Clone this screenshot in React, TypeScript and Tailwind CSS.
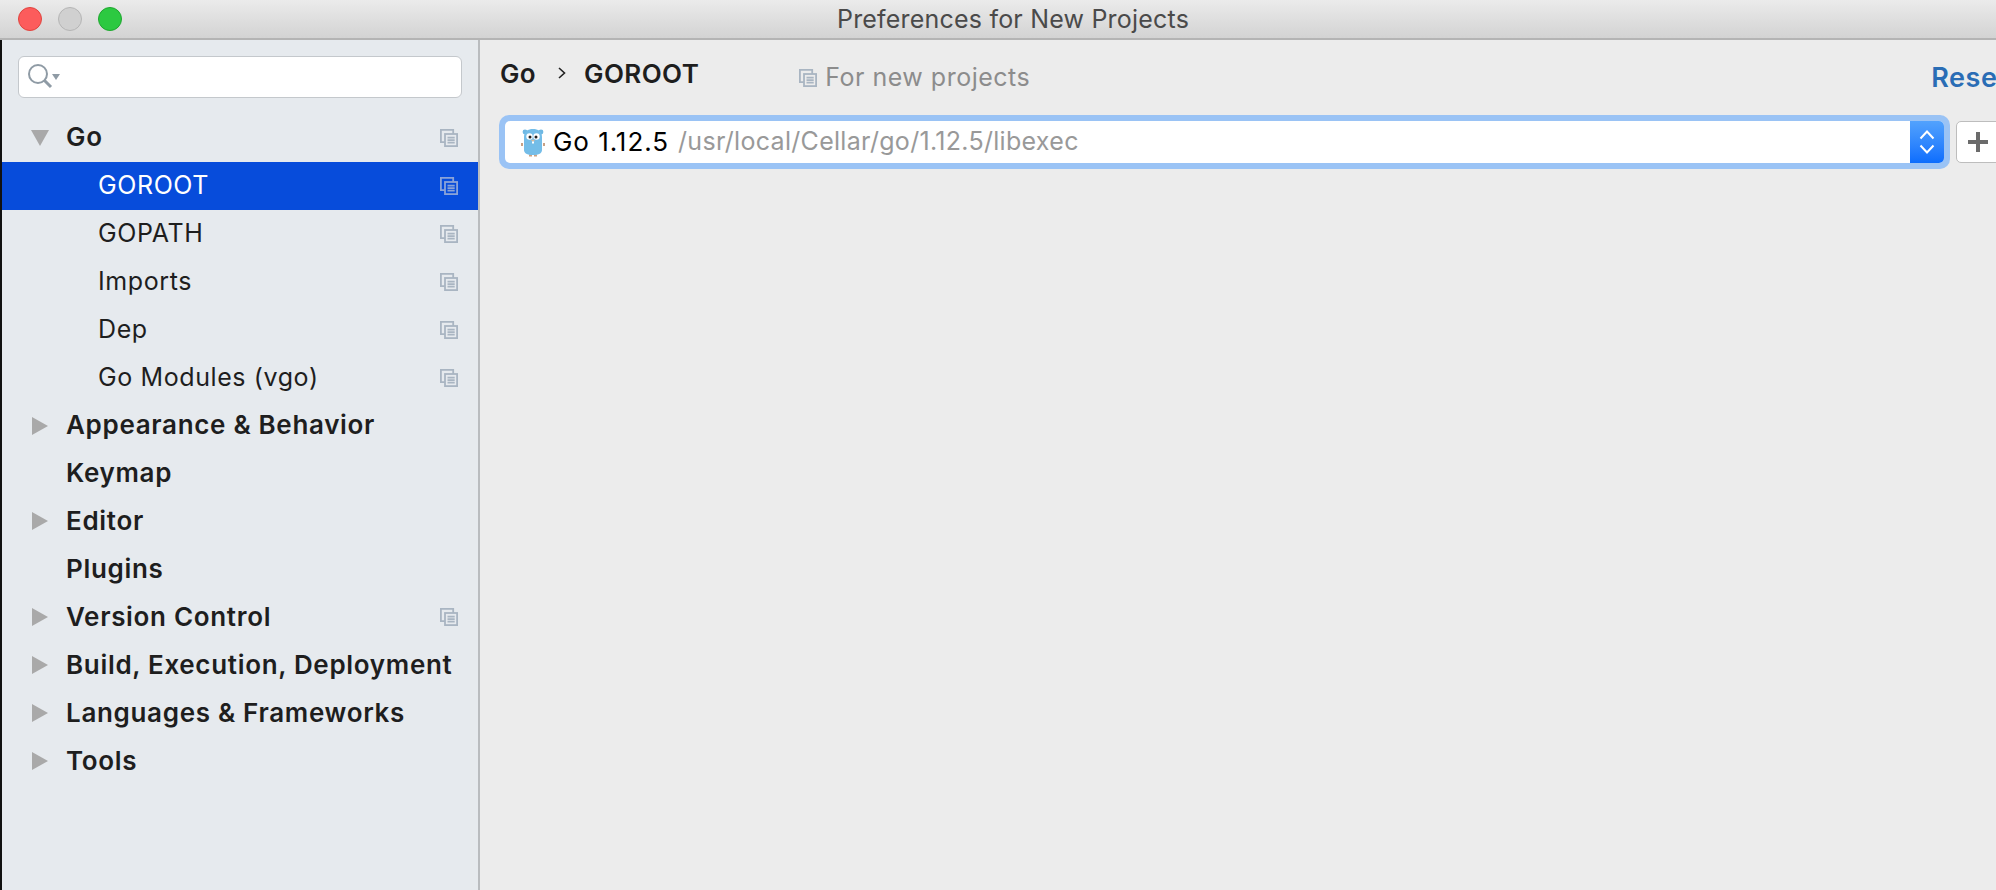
import React from 'react';

const SANS = "font-['Inter','Liberation_Sans',sans-serif]";

const ProjectIcon = ({ className = 'text-[#a9b5c2]', size = 18 }: { className?: string; size?: number }) => (
  <svg width={size} height={size} viewBox="0 0 18 18" fill="none" stroke="currentColor" strokeWidth="1.8" className={className}>
    <path d="M5 13.2H0.9V0.9H13.2V5" />
    <rect x="5" y="5" width="12.1" height="12.1" />
    <path d="M7.5 8.6H14.7M7.5 11.1H14.7M7.5 13.6H14.7" />
  </svg>
);

const Arrow = ({ open }: { open?: boolean }) => (
  <svg width="18" height="18" viewBox="0 0 18 18" className="fill-[#a9a9a9]">
    {open ? <path d="M0 1H18L9 17Z" /> : <path d="M1 0L17 9L1 18Z" />}
  </svg>
);

const Gopher = () => (
  <svg width="24" height="30" viewBox="0 0 24 30">
    <circle cx="4" cy="5" r="2.4" fill="#6fb8e3" />
    <circle cx="20" cy="5" r="2.4" fill="#6fb8e3" />
    <path d="M1 19v-3M23 19v-3" stroke="#c9a184" strokeWidth="2" />
    <path d="M8 28.5h3M13 28.5h3" stroke="#c9a184" strokeWidth="2" />
    <path d="M3 10C3 4 7 2 12 2s9 2 9 8v13c0 3-3 5-9 5s-9-2-9-5Z" fill="#74bde8" />
    <circle cx="8.5" cy="9.5" r="3.2" fill="#fff" />
    <circle cx="15.5" cy="9.5" r="3.2" fill="#fff" />
    <circle cx="9" cy="10" r="1.5" fill="#222" />
    <circle cx="15" cy="10" r="1.5" fill="#222" />
    <ellipse cx="12" cy="13.5" rx="1.6" ry="1.1" fill="#d8b89c" />
    <rect x="11" y="14.5" width="2" height="2" fill="#fff" />
  </svg>
);

type Row = { label: string; kind: 'top' | 'child'; arrow?: 'open' | 'closed'; icon?: boolean; selected?: boolean };

const rows: Row[] = [
  { label: 'Go', kind: 'top', arrow: 'open', icon: true },
  { label: 'GOROOT', kind: 'child', icon: true, selected: true },
  { label: 'GOPATH', kind: 'child', icon: true },
  { label: 'Imports', kind: 'child', icon: true },
  { label: 'Dep', kind: 'child', icon: true },
  { label: 'Go Modules (vgo)', kind: 'child', icon: true },
  { label: 'Appearance & Behavior', kind: 'top', arrow: 'closed' },
  { label: 'Keymap', kind: 'top' },
  { label: 'Editor', kind: 'top', arrow: 'closed' },
  { label: 'Plugins', kind: 'top' },
  { label: 'Version Control', kind: 'top', arrow: 'closed', icon: true },
  { label: 'Build, Execution, Deployment', kind: 'top', arrow: 'closed' },
  { label: 'Languages & Frameworks', kind: 'top', arrow: 'closed' },
  { label: 'Tools', kind: 'top', arrow: 'closed' },
];

const TreeRow = ({ row }: { row: Row }) => (
  <div className={`flex h-[47.95px] items-center pr-5 ${row.selected ? 'bg-[#074cdb] text-white' : 'text-[#1e1e1e]'}`}>
    <div className="flex w-[64px] shrink-0 justify-end pr-[17px]">
      <div className="flex w-[18px] justify-center">
        {row.arrow && <Arrow open={row.arrow === 'open'} />}
      </div>
    </div>
    <span
      className={
        row.kind === 'top'
          ? 'whitespace-nowrap pb-[2px] text-[26px] font-semibold tracking-[0.68px]'
          : 'whitespace-nowrap pl-8 text-[25px] font-normal tracking-[0.6px]'
      }
    >
      {row.label}
    </span>
    {row.icon && (
      <div className="ml-auto">
        <ProjectIcon className={row.selected ? 'text-[#8aa3d8]' : 'text-[#a9b5c2]'} />
      </div>
    )}
  </div>
);

const App: React.FC = () => {
  return (
    <div className={`flex h-[890px] w-[1996px] flex-col overflow-hidden bg-[#ececec] ${SANS}`}>
      {/* title bar */}
      <div className="relative flex h-10 shrink-0 items-center border-b-2 border-[#b4b4b4] bg-gradient-to-b from-[#ebebeb] to-[#d3d3d3] pl-[18px]">
        <div className="flex gap-4">
          <div className="size-6 rounded-full border border-[#e0443e] bg-[#fc5c5c]" />
          <div className="size-6 rounded-full border border-[#b5b5b5] bg-[#d0d0d0]" />
          <div className="size-6 rounded-full border border-[#1ea72f] bg-[#2cc941]" />
        </div>
        <div className="mt-0.5 flex-1 pr-[92px] text-center text-[25px] tracking-[0.2px] text-[#4a4a4a]">Preferences for New Projects</div>
      </div>

      <div className="flex min-h-0 flex-1">
        <div className="w-0.5 shrink-0 bg-[#111]" />
        {/* sidebar */}
        <div className="flex w-[478px] shrink-0 flex-col border-r-2 border-[#b9bcbf] bg-[#e6eaee]">
          <div className="px-4 pb-4 pt-4">
            <div className="flex h-[42px] items-center rounded-[6px] border-[1.5px] border-[#c4c8cc] bg-white pl-2">
              <svg width="34" height="26" viewBox="0 0 34 26" fill="none" stroke="#8f9ba5">
                <circle cx="11" cy="10" r="9" strokeWidth="2" />
                <path d="M17 16L24 23" strokeWidth="3" />
                <path d="M25 10H33L29 16Z" fill="#8f9ba5" stroke="none" />
              </svg>
            </div>
          </div>
          <div className="flex flex-col">
            {rows.map((row) => (
              <TreeRow key={row.label} row={row} />
            ))}
          </div>
        </div>

        {/* content */}
        <div className="min-w-0 flex-1 pl-5">
          <div className="flex h-[74px] w-[1600px] items-center">
            <div className="-mt-[8px] flex h-[54px] shrink-0 items-center text-[26px] font-semibold tracking-[0.4px] text-[#1e1e1e]">
              <span>Go</span>
              <svg width="10" height="14" viewBox="0 0 10 14" fill="none" stroke="#222" strokeWidth="1.6" className="ml-[21px] mr-[17px]">
                <path d="M2 2L7.5 7L2 12" />
              </svg>
              <span>GOROOT</span>
            </div>
            <div className="ml-[100px] mt-[2px] flex shrink-0 items-center gap-2 whitespace-nowrap text-[25px] tracking-[0.5px] text-[#8c8c8c]">
              <ProjectIcon className="text-[#a9b5c2]" size={18} />
              <span>For new projects</span>
            </div>
            <span className="ml-[901px] mt-[2px] shrink-0 whitespace-nowrap text-[27px] font-semibold tracking-[0.6px] text-[#2a6db5]">Reset</span>
          </div>

          <div className="mt-px flex w-[1600px] -translate-x-px items-center">
            <div className="flex h-[54px] w-[1451px] shrink-0 rounded-[10px] bg-[#9ac3f5] p-1.5">
              <div className="flex min-w-0 flex-1 items-center overflow-hidden rounded-[5px] bg-white pl-4 text-[25px]">
                <Gopher />
                <span className="ml-[8px] whitespace-nowrap pb-[2px] text-[26px] tracking-[0.95px] text-black">Go 1.12.5</span>
                <span className="ml-[9px] whitespace-nowrap tracking-[0.3px] text-[#999]">/usr/local/Cellar/go/1.12.5/libexec</span>
                <div className="ml-auto flex h-full w-[34px] items-center justify-center bg-gradient-to-b from-[#52a2fd] to-[#0b6dfd]">
                  <svg width="16" height="26" viewBox="0 0 16 26" fill="none" stroke="#fff" strokeWidth="2">
                    <path d="M1.5 9.5L8 2.5L14.5 9.5" />
                    <path d="M1.5 16.5L8 23.5L14.5 16.5" />
                  </svg>
                </div>
              </div>
            </div>
            <div className="ml-1.5 flex h-[42px] w-[60px] shrink-0 items-center rounded-[5px] border border-[#bdbdbd] bg-white pl-[11px]">
              <svg width="20" height="20" viewBox="0 0 20 20" className="fill-[#6b6b6b]">
                <path d="M8 0H12V8H20V12H12V20H8V12H0V8H8Z" />
              </svg>
            </div>
          </div>
        </div>
      </div>
    </div>
  );
};

export default App;
